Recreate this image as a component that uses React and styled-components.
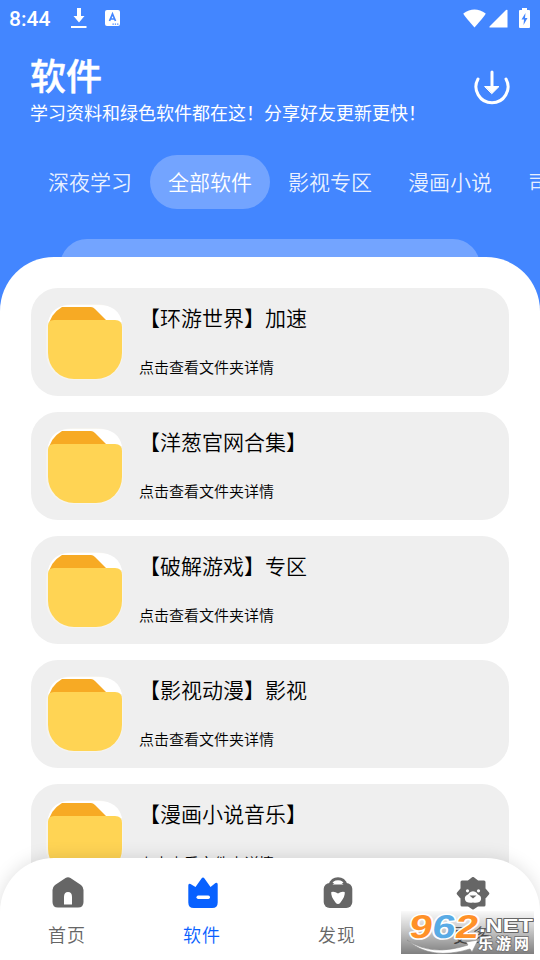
import styled, { createGlobalStyle } from "styled-components";

const GlobalStyle = createGlobalStyle`
* {
  box-sizing: border-box;
}
body {
  margin: 0;
  font-family: "Noto Sans CJK SC", "Noto Sans", sans-serif;
}
h1, h3, p {
  margin: 0;
  font-weight: 350;
}
svg {
  display: block;
  flex: none;
}
`;

const Screen = styled.div`
position: relative;
display: flex;
flex-direction: column;
width: 540px;
height: 960px;
overflow: hidden;
background: #4386ff;
`;

const StatusBar = styled.div`
height: 36px;
flex: none;
padding: 0 10px 0 9px;
display: flex;
align-items: center;
justify-content: space-between;
color: #fff;
`;

const StatusGroup = styled.div`
display: flex;
align-items: center;
gap: ${(props) => props.$gap}px;
`;

const Clock = styled.span`
width: 44px;
font: 500 21px/36px Roboto, sans-serif;
padding-top: 1px;
`;

const Head = styled.header`
height: 119px;
flex: none;
padding: 17px 30px 0;
display: flex;
justify-content: space-between;
color: #fff;
`;

const Title = styled.h1`
font-size: 36px;
line-height: 42px;
font-weight: 500;
-webkit-text-stroke: 0.5px #fff;
`;

const Slogan = styled.p`
margin-top: 1px;
font-size: 18px;
line-height: 32px;
font-weight: 400;
white-space: nowrap;
`;

const DownloadButton = styled.button`
width: 36px;
height: 36px;
margin-top: 16px;
padding: 0;
border: 0;
background: none;
`;

const Tabs = styled.nav`
flex: none;
display: flex;
padding-left: 30px;
`;

const Tab = styled.div`
flex: none;
height: 54px;
padding: 0 18px;
border-radius: 27px;
font-size: 21px;
line-height: 53px;
font-weight: 350;
color: ${(props) => (props.$active ? "#fff" : "rgba(255, 255, 255, 0.9)")};
background: ${(props) => (props.$active ? "#73a4ff" : "transparent")};
`;

const SearchBox = styled.div`
flex: none;
height: 18px;
margin: 30px 60px 0;
overflow: hidden;
&::before {
  content: "";
  display: block;
  height: 54px;
  border-radius: 27px;
  background: #73a4ff;
}
`;

const Sheet = styled.main`
flex: 1;
min-height: 0;
overflow: hidden;
padding: 31px 31px 0;
border-radius: 54px 54px 0 0;
background: #fff;
display: flex;
flex-direction: column;
gap: 16px;
`;

const Card = styled.article`
flex: none;
height: 108px;
padding: 14px 14px 0;
border-radius: 27px;
background: #efefef;
display: flex;
gap: 15px;
`;

const CardText = styled.div`
color: #000;
h3 {
  font-size: 21px;
  line-height: 31px;
}
p {
  margin-top: 21px;
  font-size: 15px;
  line-height: 26px;
}
`;

const BottomNav = styled.nav`
position: absolute;
left: 0;
right: 0;
bottom: 0;
height: 102px;
display: flex;
border-radius: 54px 54px 0 0;
background: #fff;
box-shadow: 0 0 18px rgba(0, 0, 0, 0.13);
`;

const NavItem = styled.div`
flex: 1;
padding: 18px 1px 0 0;
display: flex;
flex-direction: column;
align-items: center;
font-size: 18px;
line-height: 26px;
font-weight: 350;
letter-spacing: 1px;
color: ${(props) => (props.$active ? "#0861ff" : "#666")};
`;

const NavIcon = styled.div`
height: 45px;
padding: 1px 0 0 1px;
`;

const Stamp = styled.div`
position: absolute;
left: 401px;
top: 911px;
width: 133px;
height: 43px;
background: linear-gradient(rgba(0, 0, 0, 0.02), rgba(0, 0, 0, 0.22) 45%, rgba(0, 0, 0, 0.5));
`;

const FolderIcon = () => (
  <svg width="79" height="80" viewBox="0 0 79 80">
    <rect x="1" y="2" width="77" height="76" rx="27" fill="#f6f4ee" />
    <path d="M3 20Q7 3 25 3H54Q73 3 77 20Z" fill="#fff" />
    <path d="M3 26Q5 12 17 5H46Q48 5 50 7L62 19V27H3Z" fill="#f7aa24" />
    <path d="M3 24Q3 18 9 18H70Q77 18 77 25V51A26 26 0 0 1 51 77H29A26 26 0 0 1 3 51Z" fill="#ffd454" />
  </svg>
);

const DownloadIcon = () => (
  <svg width="36" height="36" viewBox="0 0 36 36" fill="none" stroke="#fff" strokeLinecap="round">
    <path d="M4 10A16 16 0 1 0 32 10" strokeWidth="3" />
    <path d="M18 3V18" strokeWidth="3" />
    <path d="M11 17.5H25L18 24.5Z" fill="#fff" strokeWidth="1" strokeLinejoin="round" />
  </svg>
);

const HomeIcon = () => (
  <svg width="32" height="32" viewBox="0 0 32 32">
    <path fill="currentColor" fillRule="evenodd" d="M13.5 .9Q16 -.5 18.500 .9L29 8Q31.500 10 31.500 13V25Q31.500 30.500 26 30.500H6Q.5 30.500 .5 25V13Q.5 10 3 8ZM12 27.500H20V20Q20 15 16 15T12 20Z" />
  </svg>
);

const CrownIcon = () => (
  <svg width="32" height="32" viewBox="0 0 32 32">
    <path fill="currentColor" d="M1.300 8.500Q1.300 6 3.500 7L8.500 10L14.500 1.500Q16 -.5 17.500 1.500L23.500 10L28.500 6Q30.700 5 30.700 7.500V25.500Q30.700 31 25.200 31H6.800Q1.300 31 1.300 25.500Z" />
    <rect x="9.500" y="18.500" width="13.500" height="3.500" rx="1.700" fill="#fff" />
  </svg>
);

const BagIcon = () => (
  <svg width="32" height="32" viewBox="0 0 32 32">
    <path d="M8.500 11V8C9 -.5 23 -.5 23.500 8V11" fill="none" stroke="currentColor" strokeWidth="3" />
    <rect x="1.700" y="6" width="28.600" height="25" rx="6" fill="currentColor" />
    <path d="M10.500 7.500Q16 1.500 21.500 7.500Z" fill="#fff" />
    <path d="M9.300 15Q12.500 14 16 16.500Q19.500 14 22.700 15Q23.500 19 18.500 25.500Q16 28.500 13.500 25.500Q8.500 19 9.300 15Z" fill="#fff" />
  </svg>
);

const LionIcon = () => (
  <svg width="34" height="34" viewBox="0 0 34 34">
    <path fill="currentColor" stroke="currentColor" strokeWidth="3" strokeLinejoin="round" d="M17 1.500L21.500 5H28V12L31.800 16.500L28 21V28H21.500L17 31L12.500 28H6V21L2.200 16.500L6 12V5H12.500Z" />
    <circle cx="11.500" cy="13.800" r="1.600" fill="#fff" />
    <circle cx="22.500" cy="13.800" r="1.600" fill="#fff" />
    <path fill="#fff" d="M9 22.500C8 18 13 18 13 16Q17 12.500 21 16C21 18 26 18 25 22.500Q24 26.500 17 25.500Q10 26.500 9 22.500Z" />
    <path d="M13.500 18.500H20.500L17 21.500Z" fill="currentColor" />
  </svg>
);

const DownloadStatus = () => (
  <svg width="16" height="20" viewBox="0 0 16 20" fill="#fff">
    <path d="M6 0H10V8H13.500L8 14.500L2.500 8H6ZM0 18H15.500V20H0Z" />
  </svg>
);

const InputStatus = () => (
  <svg width="15" height="16" viewBox="0 0 15 16">
    <rect width="15" height="16" rx="2" fill="#fff" />
    <path d="M4.500 11L7.500 4L10.500 11M5.500 9H9.500" fill="none" stroke="#4386ff" strokeWidth="1.700" />
    <path d="M7.500 14.200H14" stroke="#4386ff" strokeWidth="1.200" strokeDasharray="1.300 1" />
  </svg>
);

const WifiStatus = () => (
  <svg width="23" height="19" viewBox="0 0 23 19" fill="#fff">
    <path d="M.3 4.500Q11.500 -3.500 22.700 4.500Q22.500 6 11.500 18.500Q.5 6 .3 4.500Z" />
  </svg>
);

const SignalStatus = () => (
  <svg width="19" height="19" viewBox="0 0 19 19" fill="#fff">
    <path d="M18.500 1V18.500H.5Q0 17.500 1 17L17 1Q18 .3 18.500 1Z" />
  </svg>
);

const BatteryStatus = () => (
  <svg width="11" height="20" viewBox="0 0 11 20">
    <path d="M3 0H8V2H10Q11 2 11 3V19Q11 20 10 20H1Q0 20 0 19V3Q0 2 1 2H3Z" fill="#fff" />
    <path d="M6.500 5L2.500 11.500H5L4.500 17L8.500 10H6Z" fill="#4386ff" />
  </svg>
);

const StampArt = () => (
  <svg width="133" height="43" viewBox="0 0 133 43">
    <path d="M6 29Q30 46 67 34L65 31L77 29L71 41L69 38Q30 50 6 29Z" fill="#fff" stroke="#888" strokeWidth=".6" />
    <g fontFamily="Liberation Sans, sans-serif" fontWeight="700" stroke="#fff" paintOrder="stroke" strokeLinejoin="round">
      <g fontSize="33" strokeWidth="3" transform="translate(4 0) skewX(-8)">
        <text x="7" y="27" textLength="23" lengthAdjust="spacingAndGlyphs" fill="#ff9128">9</text>
        <text x="30" y="27" textLength="23" lengthAdjust="spacingAndGlyphs" fill="#59abe5">6</text>
        <text x="53" y="27" textLength="23" lengthAdjust="spacingAndGlyphs" fill="#ff9128">2</text>
      </g>
      <text x="78" y="21" fontSize="18" textLength="54" lengthAdjust="spacingAndGlyphs" fill="#fff" stroke="#666" strokeWidth="1.800">.NET</text>
      <text x="77" y="38" fontSize="15" textLength="51" fontFamily="Noto Sans CJK SC, sans-serif" fill="#fff" stroke="#777" strokeWidth="1.800">乐游网</text>
    </g>
  </svg>
);

const tabs = ["深夜学习", "全部软件", "影视专区", "漫画小说", "司机专区"];

const folders = [
  "【环游世界】加速",
  "【洋葱官网合集】",
  "【破解游戏】专区",
  "【影视动漫】影视",
  "【漫画小说音乐】",
];

const navItems = [
  { label: "首页", Icon: HomeIcon },
  { label: "软件", Icon: CrownIcon },
  { label: "发现", Icon: BagIcon },
  { label: "更多", Icon: LionIcon },
];

function App() {
  return (
    <Screen>
      <GlobalStyle />
      <StatusBar>
        <StatusGroup $gap={18}>
          <Clock>8:44</Clock>
          <DownloadStatus />
          <InputStatus />
        </StatusGroup>
        <StatusGroup $gap={11}>
          <StatusGroup $gap={3}>
            <WifiStatus />
            <SignalStatus />
          </StatusGroup>
          <BatteryStatus />
        </StatusGroup>
      </StatusBar>
      <Head>
        <div>
          <Title>软件</Title>
          <Slogan>学习资料和绿色软件都在这！分享好友更新更快！</Slogan>
        </div>
        <DownloadButton>
          <DownloadIcon />
        </DownloadButton>
      </Head>
      <Tabs>
        {tabs.map((tab) => (
          <Tab key={tab} $active={tab === "全部软件"}>{tab}</Tab>
        ))}
      </Tabs>
      <SearchBox />
      <Sheet>
        {folders.map((name) => (
          <Card key={name}>
            <FolderIcon />
            <CardText>
              <h3>{name}</h3>
              <p>点击查看文件夹详情</p>
            </CardText>
          </Card>
        ))}
      </Sheet>
      <BottomNav>
        {navItems.map(({ label, Icon }) => (
          <NavItem key={label} $active={label === "软件"}>
            <NavIcon>
              <Icon />
            </NavIcon>
            {label}
          </NavItem>
        ))}
      </BottomNav>
      <Stamp>
        <StampArt />
      </Stamp>
    </Screen>
  );
}

export default App;
